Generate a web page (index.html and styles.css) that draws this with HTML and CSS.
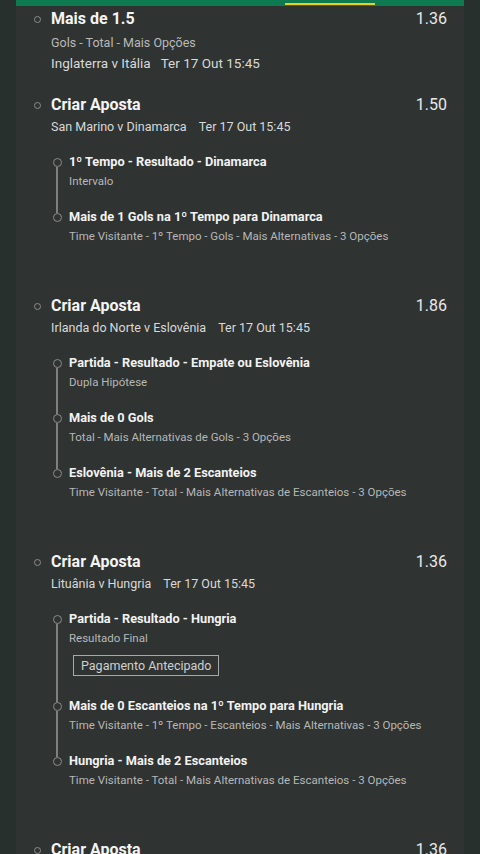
FILE: index.html
```html
<!DOCTYPE html>
<html>
<head>
    <title>Minhas Apostas</title>
    <link rel="stylesheet" href="styles.css">
</head>
<body>
    <div class="card">
        <div class="tabbar"><span class="tab-active"></span></div>

        <div class="group single">
            <div class="leg">
                <span class="dot"></span>
                <div class="leg-body">
                    <div class="leg-top">
                        <span class="leg-title">Mais de 1.5</span>
                        <span class="odds">1.36</span>
                    </div>
                    <div class="market">Gols - Total - Mais Opções</div>
                    <div class="meta">Inglaterra v Itália<span class="date">Ter 17 Out 15:45</span></div>
                </div>
            </div>
        </div>

        <div class="group">
            <div class="leg">
                <span class="dot"></span>
                <div class="leg-body">
                    <div class="leg-top">
                        <span class="leg-title">Criar Aposta</span>
                        <span class="odds">1.50</span>
                    </div>
                    <div class="meta">San Marino v Dinamarca<span class="date">Ter 17 Out 15:45</span></div>
                </div>
            </div>
            <ul class="subs">
                <li class="sub">
                    <div class="rail"><span class="seg"></span><span class="ring"></span><span class="seg grow"></span></div>
                    <div class="sub-body">
                        <div class="sub-title">1º Tempo - Resultado - Dinamarca</div>
                        <div class="sub-desc">Intervalo</div>
                    </div>
                </li>
                <li class="sub">
                    <div class="rail"><span class="seg"></span><span class="ring"></span><span class="seg grow"></span></div>
                    <div class="sub-body">
                        <div class="sub-title">Mais de 1 Gols na 1º Tempo para Dinamarca</div>
                        <div class="sub-desc">Time Visitante - 1º Tempo - Gols - Mais Alternativas - 3 Opções</div>
                    </div>
                </li>
            </ul>
        </div>

        <div class="group">
            <div class="leg">
                <span class="dot"></span>
                <div class="leg-body">
                    <div class="leg-top">
                        <span class="leg-title">Criar Aposta</span>
                        <span class="odds">1.86</span>
                    </div>
                    <div class="meta">Irlanda do Norte v Eslovênia<span class="date">Ter 17 Out 15:45</span></div>
                </div>
            </div>
            <ul class="subs">
                <li class="sub">
                    <div class="rail"><span class="seg"></span><span class="ring"></span><span class="seg grow"></span></div>
                    <div class="sub-body">
                        <div class="sub-title">Partida - Resultado - Empate ou Eslovênia</div>
                        <div class="sub-desc">Dupla Hipótese</div>
                    </div>
                </li>
                <li class="sub">
                    <div class="rail"><span class="seg"></span><span class="ring"></span><span class="seg grow"></span></div>
                    <div class="sub-body">
                        <div class="sub-title">Mais de 0 Gols</div>
                        <div class="sub-desc">Total - Mais Alternativas de Gols - 3 Opções</div>
                    </div>
                </li>
                <li class="sub">
                    <div class="rail"><span class="seg"></span><span class="ring"></span><span class="seg grow"></span></div>
                    <div class="sub-body">
                        <div class="sub-title">Eslovênia - Mais de 2 Escanteios</div>
                        <div class="sub-desc">Time Visitante - Total - Mais Alternativas de Escanteios - 3 Opções</div>
                    </div>
                </li>
            </ul>
        </div>

        <div class="group">
            <div class="leg">
                <span class="dot"></span>
                <div class="leg-body">
                    <div class="leg-top">
                        <span class="leg-title">Criar Aposta</span>
                        <span class="odds">1.36</span>
                    </div>
                    <div class="meta">Lituânia v Hungria<span class="date">Ter 17 Out 15:45</span></div>
                </div>
            </div>
            <ul class="subs">
                <li class="sub">
                    <div class="rail"><span class="seg"></span><span class="ring"></span><span class="seg grow"></span></div>
                    <div class="sub-body">
                        <div class="sub-title">Partida - Resultado - Hungria</div>
                        <div class="sub-desc">Resultado Final</div>
                        <span class="badge">Pagamento Antecipado</span>
                    </div>
                </li>
                <li class="sub">
                    <div class="rail"><span class="seg"></span><span class="ring"></span><span class="seg grow"></span></div>
                    <div class="sub-body">
                        <div class="sub-title">Mais de 0 Escanteios na 1º Tempo para Hungria</div>
                        <div class="sub-desc">Time Visitante - 1º Tempo - Escanteios - Mais Alternativas - 3 Opções</div>
                    </div>
                </li>
                <li class="sub">
                    <div class="rail"><span class="seg"></span><span class="ring"></span><span class="seg grow"></span></div>
                    <div class="sub-body">
                        <div class="sub-title">Hungria - Mais de 2 Escanteios</div>
                        <div class="sub-desc">Time Visitante - Total - Mais Alternativas de Escanteios - 3 Opções</div>
                    </div>
                </li>
            </ul>
        </div>

        <div class="group">
            <div class="leg">
                <span class="dot"></span>
                <div class="leg-body">
                    <div class="leg-top">
                        <span class="leg-title">Criar Aposta</span>
                        <span class="odds">1.36</span>
                    </div>
                </div>
            </div>
        </div>
    </div>
</body>
</html>
```

FILE: styles.css
```css
html, body {
    margin: 0;
    height: 100%;
    overflow: hidden;
}
body {
    background: #27302d;
    font-family: Roboto, "Liberation Sans", sans-serif;
    color: #f1f1f1;
}
.card {
    margin: 0 16px;
    min-height: 100%;
    background: #2f3331;
}
.tabbar {
    height: 6px;
    background: #0d7a4f;
    display: flex;
    align-items: flex-end;
    padding-left: 269px;
}
.tab-active {
    width: 90px;
    height: 2px;
    margin-bottom: 1px;
    background: #e6d21c;
}

/* bet groups */
.group {
    padding-bottom: 31px;
}
.group.single {
    padding-top: 1px;
    padding-bottom: 20px;
}
.leg {
    display: flex;
    padding: 0 17px 0 14px;
}
.dot {
    flex: none;
    width: 5px;
    height: 5px;
    margin: 9px 10px 0 4px;
    border: 1px solid #8d8d8d;
    border-radius: 50%;
}
.leg-body {
    flex: 1;
}
.leg-top {
    display: flex;
    justify-content: space-between;
    align-items: baseline;
    line-height: 24px;
}
.leg-title {
    font-size: 16px;
    font-weight: 700;
    color: #f4f4f4;
}
.odds {
    font-size: 16px;
    color: #e9e9e9;
}
.market {
    margin-top: 2px;
    font-size: 12.5px;
    line-height: 20px;
    color: #b9b9b9;
}
.meta {
    font-size: 12.5px;
    line-height: 20px;
    color: #d9d9d9;
}
.date {
    margin-left: 12px;
}
.single .meta {
    font-size: 13.5px;
}
.single .date {
    margin-left: 10px;
}

/* bet builder selections */
.subs {
    list-style: none;
    margin: 16px 0 0;
    padding: 0 0 0 34px;
}
.sub {
    display: flex;
}
.rail {
    flex: none;
    width: 14px;
    display: flex;
    flex-direction: column;
    align-items: center;
}
.seg {
    width: 2px;
    height: 5px;
    background: #7f7f7f;
}
.seg.grow {
    flex: 1;
}
.sub:first-child .seg:first-child,
.sub:last-child .seg.grow {
    background: transparent;
}
.ring {
    flex: none;
    box-sizing: border-box;
    width: 9px;
    height: 9px;
    border: 1.5px solid #8d8d8d;
    border-radius: 50%;
}
.sub-body {
    flex: 1;
    padding: 0 0 18px 5px;
}
.sub-title {
    font-size: 12.75px;
    font-weight: 700;
    line-height: 18px;
    color: #f2f2f2;
}
.sub-desc {
    margin-top: 1px;
    font-size: 11.5px;
    line-height: 18px;
    color: #b7b7b7;
}
.badge {
    display: inline-block;
    margin: 8px 0 3px 4px;
    padding: 0 7px;
    border: 1px solid #a8a8a8;
    font-size: 12.5px;
    line-height: 19px;
    color: #d0d0d0;
}
```
